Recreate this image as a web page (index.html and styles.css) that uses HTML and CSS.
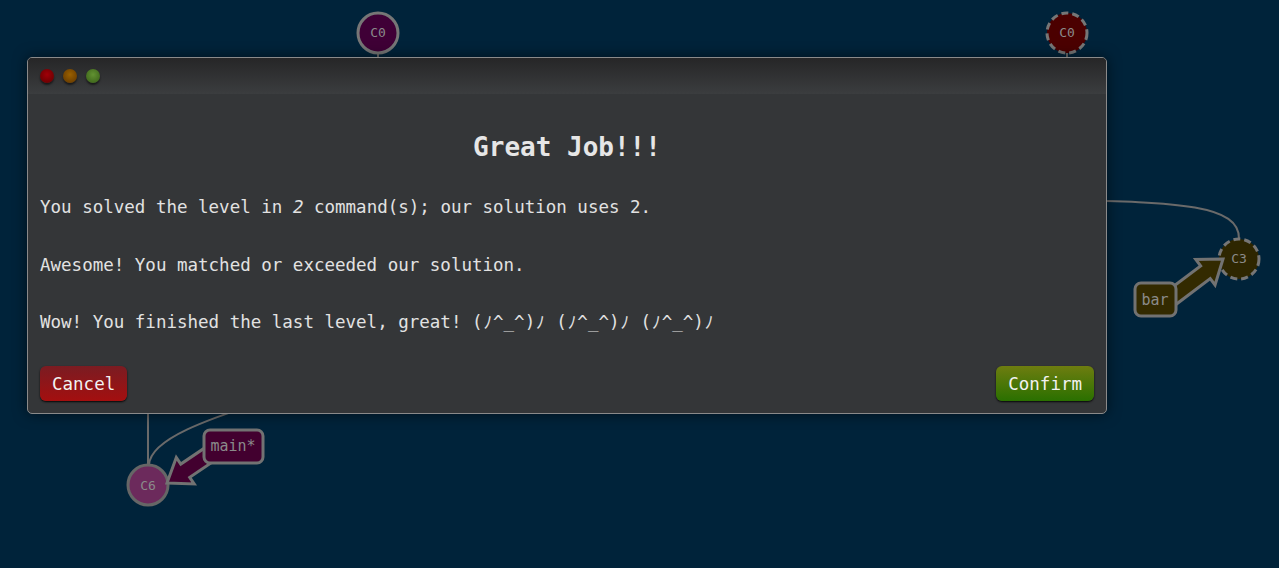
FILE: index.html
```html
<!DOCTYPE html>
<html>
<head>
<meta charset="utf-8">
<link rel="stylesheet" href="styles.css">
</head>
<body>
<div class="canvas">
  <svg class="graph" width="1279" height="568" viewBox="0 0 1279 568">
    <g class="edges">
      <path d="M378 53 L378 120"/>
      <path d="M1067 53 L1067 120"/>
      <path d="M1060 200 C1180 202 1240 205 1239 239"/>
      <path d="M148 400 L148 465"/>
      <path d="M300 390 C200 420 150 440 149 465"/>
    </g>
    <g class="node">
      <circle cx="378" cy="33" r="20" class="n-purple"/>
      <text x="378" y="37">C0</text>
    </g>
    <g class="node">
      <circle cx="1067" cy="33" r="20" class="n-red dashed"/>
      <text x="1067" y="37">C0</text>
    </g>
    <g class="node">
      <circle cx="1239" cy="259" r="20" class="n-olive dashed"/>
      <text x="1239" y="263">C3</text>
    </g>
    <g class="node">
      <circle cx="148" cy="485" r="20" class="n-pink"/>
      <text x="148" y="490">C6</text>
    </g>
    <polygon class="arrow a-olive" transform="translate(1223 259) rotate(-37)" points="0,0 -22,-16 -22,-8 -68,-8 -68,8 -22,8 -22,16"/>
    <polygon class="arrow a-purple" transform="translate(167 483) rotate(146)" points="0,0 -22,-16 -22,-8 -62,-8 -62,8 -22,8 -22,16"/>
    <g class="label">
      <rect x="1135" y="283" width="41" height="33" rx="6" class="a-olive"/>
      <text x="1155" y="305">bar</text>
    </g>
    <g class="label">
      <rect x="204" y="430" width="59" height="33" rx="6" class="a-purple"/>
      <text x="233" y="451">main*</text>
    </g>
  </svg>

  <div class="dialog">
    <div class="titlebar">
      <span class="dot red"></span>
      <span class="dot orange"></span>
      <span class="dot green"></span>
    </div>
    <div class="body">
      <h2 class="title">Great Job!!!</h2>
      <p class="line">You solved the level in <em>2</em> command(s); our solution uses 2.</p>
      <p class="line">Awesome! You matched or exceeded our solution.</p>
      <p class="line">Wow! You finished the last level, great! (<span class="kana">ﾉ</span>^_^)<span class="kana">ﾉ</span> (<span class="kana">ﾉ</span>^_^)<span class="kana">ﾉ</span> (<span class="kana">ﾉ</span>^_^)<span class="kana">ﾉ</span></p>
      <div class="actions">
        <button class="btn cancel">Cancel</button>
        <button class="btn confirm">Confirm</button>
      </div>
    </div>
  </div>
</div>
</body>
</html>
```

FILE: styles.css
```css
html, body {
  margin: 0;
  padding: 0;
  background: #00233a;
  width: 1279px;
  height: 568px;
  overflow: hidden;
}

.canvas {
  position: relative;
  width: 1279px;
  height: 568px;
}

.graph {
  position: absolute;
  left: 0;
  top: 0;
}

.edges path {
  fill: none;
  stroke: #6a6a6a;
  stroke-width: 2;
}

.node circle {
  stroke: #767676;
  stroke-width: 3;
}

.node circle.dashed {
  stroke-dasharray: 7 4;
}

.n-purple { fill: #3f0036; }
.n-red { fill: #4b0000; }
.n-olive { fill: #2e2600; }
.n-pink { fill: #6c2a5c; stroke: #666 !important; }

.node text,
.label text {
  font-family: "DejaVu Sans Mono", monospace;
  fill: #8a8a8a;
  text-anchor: middle;
}

.node text { font-size: 13px; }
.label text { font-size: 15px; }

.arrow {
  stroke-linejoin: miter;
}

.a-olive { fill: #332a00; stroke: #727272; stroke-width: 3; }
.a-purple { fill: #42002f; stroke: #727272; stroke-width: 3; }

.dialog {
  position: absolute;
  left: 27px;
  top: 57px;
  width: 1078px;
  height: 355px;
  border: 1px solid #8a8a8a;
  border-radius: 5px;
  background: #343638;
  box-shadow: 0 0 14px rgba(0, 0, 0, 0.55);
  overflow: hidden;
  font-family: "DejaVu Sans Mono", "Noto Sans CJK JP", monospace;
  color: #e2e2e2;
}

.titlebar {
  height: 36px;
  background: linear-gradient(#262627, #3b3d3f);
  display: flex;
  align-items: center;
  gap: 9px;
  padding-left: 12px;
}

.dot {
  width: 14px;
  height: 14px;
  border-radius: 50%;
  box-shadow: 0 2px 2px rgba(0, 0, 0, 0.55);
}

.dot.red { background: radial-gradient(circle at 50% 40%, #a00008, #5e0000); }
.dot.orange { background: radial-gradient(circle at 50% 40%, #9a6000, #5e3400); }
.dot.green { background: radial-gradient(circle at 50% 40%, #629232, #365c16); }

.body {
  display: flex;
  flex-direction: column;
  padding: 0 12px;
}

.title {
  margin: 38px 0 0;
  font-size: 26px;
  line-height: 30px;
  font-weight: bold;
  text-align: center;
  color: #e6e6e6;
}

.line {
  margin: 34px 0 0;
  font-size: 17.5px;
  line-height: 22px;
  white-space: nowrap;
}

.line + .line {
  margin-top: 35.5px;
}

.line em {
  font-style: italic;
}

.kana {
  display: inline-block;
  width: 1ch;
  text-align: center;
}

.actions {
  display: flex;
  justify-content: space-between;
  margin-top: 33px;
}

.btn {
  font-family: "DejaVu Sans Mono", monospace;
  font-size: 17.5px;
  color: #f2f2f2;
  height: 35px;
  padding: 0 12px;
  border: none;
  border-radius: 6px;
  box-shadow: 0 1px 2px rgba(0, 0, 0, 0.9);
  cursor: pointer;
}

.cancel {
  background: linear-gradient(#7a1c22, #a40f0f);
}

.confirm {
  background: linear-gradient(#6e7d10, #2a7000);
}
```
